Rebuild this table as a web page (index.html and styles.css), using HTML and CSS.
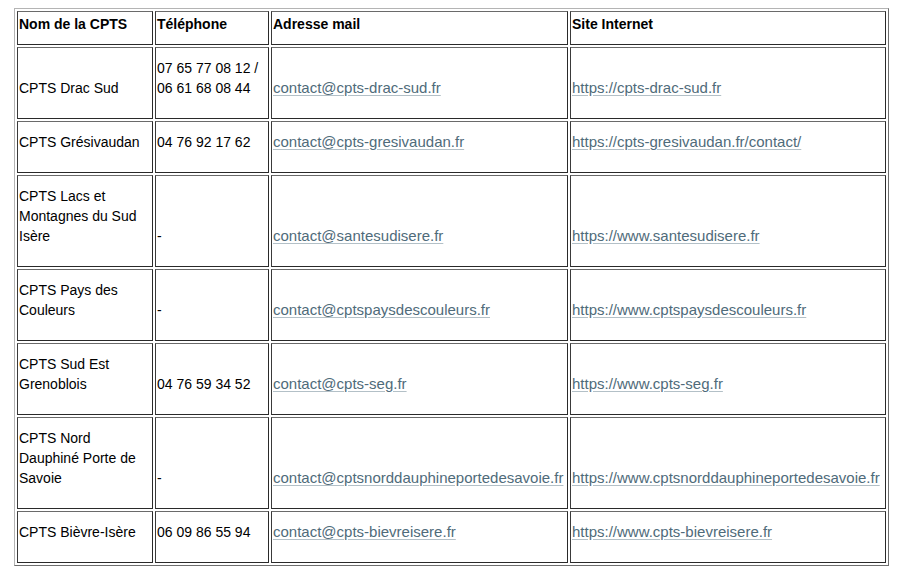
FILE: index.html
```html
<!DOCTYPE html>
<html lang="fr">
<head>
<meta charset="utf-8">
<title>CPTS</title>
<link rel="stylesheet" href="styles.css">
</head>
<body>
<table class="cpts">
  <colgroup>
    <col class="c-name">
    <col class="c-tel">
    <col class="c-mail">
    <col class="c-site">
  </colgroup>
  <thead>
    <tr>
      <th>Nom de la CPTS</th>
      <th>Téléphone</th>
      <th>Adresse mail</th>
      <th>Site Internet</th>
    </tr>
  </thead>
  <tbody>
    <tr>
      <td>CPTS Drac Sud</td>
      <td>07 65 77 08 12 / 06 61 68 08 44</td>
      <td><a class="lnk" href="#">contact@cpts-drac-sud.fr</a></td>
      <td><a class="lnk" href="#">https://cpts-drac-sud.fr</a></td>
    </tr>
    <tr>
      <td>CPTS Grésivaudan</td>
      <td>04 76 92 17 62</td>
      <td><a class="lnk" href="#">contact@cpts-gresivaudan.fr</a></td>
      <td><a class="lnk" href="#">https://cpts-gresivaudan.fr/contact/</a></td>
    </tr>
    <tr>
      <td>CPTS Lacs et Montagnes du Sud Isère</td>
      <td>-</td>
      <td><a class="lnk" href="#">contact@santesudisere.fr</a></td>
      <td><a class="lnk" href="#">https://www.santesudisere.fr</a></td>
    </tr>
    <tr>
      <td>CPTS Pays des Couleurs</td>
      <td>-</td>
      <td><a class="lnk" href="#">contact@cptspaysdescouleurs.fr</a></td>
      <td><a class="lnk" href="#">https://www.cptspaysdescouleurs.fr</a></td>
    </tr>
    <tr>
      <td>CPTS Sud Est Grenoblois</td>
      <td>04 76 59 34 52</td>
      <td><a class="lnk" href="#">contact@cpts-seg.fr</a></td>
      <td><a class="lnk" href="#">https://www.cpts-seg.fr</a></td>
    </tr>
    <tr>
      <td>CPTS Nord Dauphiné Porte de Savoie</td>
      <td>-</td>
      <td><a class="lnk" href="#">contact@cptsnorddauphineportedesavoie.fr</a></td>
      <td><a class="lnk" href="#">https://www.cptsnorddauphineportedesavoie.fr</a></td>
    </tr>
    <tr>
      <td>CPTS Bièvre-Isère</td>
      <td>06 09 86 55 94</td>
      <td><a class="lnk" href="#">contact@cpts-bievreisere.fr</a></td>
      <td><a class="lnk" href="#">https://www.cpts-bievreisere.fr</a></td>
    </tr>
  </tbody>
</table>
</body>
</html>
```

FILE: styles.css
```css
html, body {
  margin: 0;
  padding: 0;
  background: #ffffff;
}

body {
  font-family: "Liberation Sans", Arial, sans-serif;
  font-size: 14px;
  color: #000000;
}

.cpts {
  margin: 8px 0 0 14px;
  width: 875px;
  table-layout: fixed;
  border-collapse: separate;
  border-spacing: 2px;
  border: 1px solid;
  border-color: #b4b4b4 #6e6e6e #6e6e6e #b4b4b4;
}

.c-name { width: 136px; }
.c-tel  { width: 114px; }
.c-mail { width: 297px; }
.c-site { width: 316px; }

.cpts th,
.cpts td {
  border: 1px solid;
  border-color: #6a6a6a #2a2a2a #2a2a2a #3a3a3a;
  text-align: left;
  vertical-align: bottom;
  line-height: 20px;
  overflow: visible;
  white-space: normal;
}

.cpts th {
  font-weight: bold;
  padding: 2px 1px 10px 1px;
}

.cpts td {
  padding: 10px 1px 20px 1px;
}

.lnk {
  font-size: 15px;
  color: #4f6b7a;
  text-decoration: underline;
  text-decoration-color: #b3c0c7;
  text-underline-offset: 2px;
  white-space: nowrap;
}
```
